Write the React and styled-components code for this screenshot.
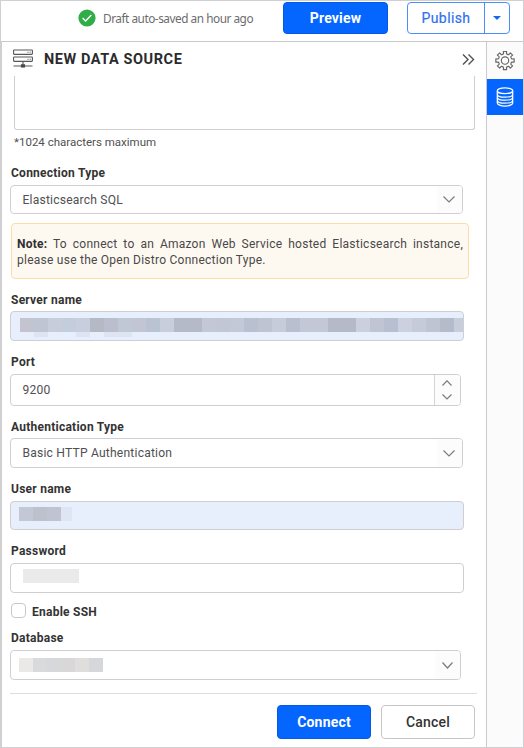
import React from "react";
import styled, { createGlobalStyle, css } from "styled-components";

const GlobalStyle = createGlobalStyle`
  *, *::before, *::after { box-sizing: border-box; }
  body { margin: 0; background: #fff; }
  button { font: inherit; margin: 0; padding: 0; }
`;

const Frame = styled.div`
  width: 524px;
  height: 748px;
  display: flex;
  flex-direction: column;
  border: 1px solid #d0d0d2;
  overflow: hidden;
  background: #fff;
  color: #333;
  font-family: Roboto, sans-serif;
`;

const TopBar = styled.header`
  height: 41px;
  flex: none;
  display: flex;
  align-items: flex-start;
  padding: 1px 12px 0 77px;
  border-bottom: 1px solid #c9c9cb;
`;

const SavedStatus = styled.div`
  display: flex;
  align-items: center;
  gap: 7px;
  width: 205px;
  height: 31px;
  color: #6c6c6e;
  font: 11.8px "Noto Sans", sans-serif;
  letter-spacing: -0.47px;
  white-space: nowrap;
  svg { flex: none; }
`;

const Button = styled.button`
  display: flex;
  align-items: center;
  justify-content: center;
  width: ${(p) => p.$width}px;
  height: ${(p) => p.$height}px;
  border-radius: 4px;
  font-size: 14px;
  font-weight: ${(p) => (p.$primary ? 700 : 500)};
  letter-spacing: 0.2px;
  ${(p) =>
    p.$primary
      ? css`background: #0565ff; color: #fff; border: 1px solid #0458e6;`
      : css`background: #fff; color: #333; border: 1px solid #c6c6c8;`}
`;

const SplitButton = styled.div`
  display: flex;
  width: 103px;
  height: 32px;
  margin-left: 19px;
  border: 1px solid #4a8dfb;
  border-radius: 4px;
  color: #2f70f0;
`;

const SplitMain = styled.button`
  flex: 1;
  border: 0;
  background: none;
  color: inherit;
  font-size: 14px;
  font-weight: 400;
  letter-spacing: 0.4px;
  -webkit-text-stroke: 0.2px;
`;

const SplitToggle = styled.button`
  display: grid;
  place-items: center;
  width: 25px;
  border: 0;
  border-left: 1px solid #4a8dfb;
  background: none;
`;

const Body = styled.div`
  flex: 1;
  display: flex;
  min-height: 0;
`;

const Panel = styled.main`
  width: 485px;
  padding: 0 9px;
  border-left: 1px solid #d0d0d2;
`;

const Rail = styled.nav`
  flex: 1;
  background: #fbfbfb;
  border-left: 1px solid #cbcbcd;
`;

const RailItem = styled.button`
  display: grid;
  place-items: center;
  width: 100%;
  height: ${(p) => (p.$active ? 36 : 37)}px;
  border: 0;
  background: ${(p) => (p.$active ? "#0565ff" : "#fbfbfb")};
`;

const TitleRow = styled.div`
  display: flex;
  align-items: center;
  height: 34px;
  padding: 0 2px;
`;

const Title = styled.h1`
  flex: 1;
  margin: 0 0 0 11px;
  font-size: 14.5px;
  font-weight: 700;
  letter-spacing: 0.57px;
  color: #2b2b2d;
`;

const TextArea = styled.div`
  width: 461px;
  height: 54px;
  margin-left: 3px;
  border: 1px solid #cfcfd1;
  border-top: 0;
  border-radius: 0 0 3px 3px;
`;

const Helper = styled.div`
  margin: 2px 0 0 3px;
  font-size: 11.5px;
  line-height: 20px;
  color: #505052;
`;

const Label = styled.div`
  height: 20px;
  margin-top: ${(p) => p.$top}px;
  font-size: 12px;
  font-weight: 700;
  line-height: ${(p) => (p.$low ? 22 : 20)}px;
  letter-spacing: 0.25px;
`;

const Field = styled.div`
  display: flex;
  width: ${(p) => p.$width}px;
  height: ${(p) => p.$height}px;
  margin: ${(p) => p.$top ?? 2}px 0 0 -1px;
  border: 1px solid #cfcfd1;
  border-radius: 4px;
  overflow: hidden;
  background: ${(p) => (p.$filled ? "#e7eefc" : "#fff")};
`;

const Value = styled.div`
  flex: 1;
  align-self: center;
  padding-left: 11.5px;
  font-size: 12.1px;
  letter-spacing: 0.2px;
  color: #505052;
`;

const FieldEnd = styled.div`
  display: flex;
  flex-direction: column;
  align-items: center;
  justify-content: center;
  gap: 8px;
  width: ${(p) => (p.$divided ? 26 : 25)}px;
  padding-right: ${(p) => p.$inset ?? 2}px;
  background: #fcfcfc;
  border-left: ${(p) => (p.$divided ? "1px solid #d3d3d5" : "0")};
`;

const Note = styled.div`
  width: 458px;
  height: 56px;
  margin: 9px 0 0 0;
  padding: 12px 5px 0;
  border: 1px solid #fbdda9;
  border-radius: 4px;
  background: #fef9f0;
  font-size: 12px;
  line-height: 16px;
  letter-spacing: 0.25px;
  color: #48484a;
  text-align: justify;
`;

const NoteLead = styled.b`
  color: #303032;
`;

const Redacted = styled.div`
  flex: 1;
  padding: ${(p) => p.$pad};
`;

const MosaicRow = styled.div`
  display: flex;
  height: ${(p) => p.$height}px;
`;

const Cell = styled.span`
  flex: none;
  width: ${(p) => p.$width ?? 14}px;
  background: ${(p) => p.$color};
`;

const CheckRow = styled.label`
  display: flex;
  align-items: center;
  gap: 6px;
  height: 16px;
  margin-top: 9px;
  font-size: 12px;
  letter-spacing: 0.25px;
`;

const CheckBox = styled.span`
  width: 15px;
  height: 15px;
  border: 1px solid #c9c9cb;
  border-radius: 4px;
`;

const CheckText = styled.span`
  padding-top: 3px;
  font-weight: 700;
`;

const Footer = styled.footer`
  display: flex;
  justify-content: flex-end;
  gap: 10px;
  width: 467px;
  margin: 13px 0 0 -1px;
  padding: 11px 2px 0 0;
  border-top: 1px solid #dededf;
`;

const SERVER = "#c3c4cf #bfc5d3 #c8cddb #c4cddb #c9cedc #b5b9c5 #bbbfcd #c0c8d5 #c2c6d4 #b9c3d1 #c8cedb #b4bac8 #b4bac8 #c4c8d6 #c1c7d5 #c4c9d7 #b9c0d0 #bfc4d2 #c7ccda #b9bfce #c2c8d5 #c4c8d6 #b6bac7 #b6bac7 #ccd0de #c1c4d1 #b7bfd1 #cdd0de #c5cbd9 #bfc4d3 #b4bbcb #c7cddb".split(" ");
const SERVER_TAIL = [0, 1, 0, 0, 1, 0, 1, 1].map((on) => (on ? "#dee4f4" : "transparent"));

const Mosaic = ({ colors, height = 14, last }) => (
  <MosaicRow $height={height}>
    {colors.map((c, i) => (
      <Cell key={i} $color={c} $width={i === colors.length - 1 ? last : undefined} />
    ))}
  </MosaicRow>
);

const Chevron = ({ w = 12, h = 6, up }) => (
  <svg width={w} height={h + 1} viewBox={`0 0 ${w} ${h + 1}`} fill="none" stroke="#7c7c7e" strokeWidth="1.2">
    <path d={up ? `M.5 ${h + 0.5}L${w / 2} .8l${w / 2 - 0.5} ${h - 0.3}` : `M.5 .5L${w / 2} ${h}L${w - 0.5} .5`} />
  </svg>
);

const CheckIcon = () => (
  <svg width="18" height="18" viewBox="0 0 18 18">
    <circle cx="9" cy="9" r="8.6" fill="#2fad47" />
    <path d="M4.6 9.1l3 3 5.7-6" fill="none" stroke="#fff" strokeWidth="1.4" />
  </svg>
);

const ServerIcon = () => (
  <svg width="20" height="20" viewBox="0 0 20 20" fill="none" stroke="#58585a" strokeWidth="1.1">
    <rect x=".6" y="1" width="18.8" height="4.4" rx=".6" />
    <rect x=".6" y="8" width="18.8" height="4.4" rx=".6" />
    <path d="M14.5 3.2h1M16.7 3.2h1M14.5 10.2h1M16.7 10.2h1M10 12.4v3M.5 17h19" />
    <rect x="8.3" y="15.7" width="3.4" height="2.4" fill="#48484a" stroke="#48484a" strokeWidth=".8" />
  </svg>
);

const gearOutline = () => {
  const at = (r, deg) => {
    const a = (deg * Math.PI) / 180;
    return `${(10 + r * Math.cos(a)).toFixed(2)} ${(10 + r * Math.sin(a)).toFixed(2)}`;
  };
  let d = "";
  for (let i = 0; i < 8; i++) {
    const c = i * 45;
    d += `${i ? "L" : "M"}${at(7, c - 12)}L${at(9.3, c - 10)}L${at(9.3, c + 10)}L${at(7, c + 12)}Q${at(6.2, c + 22.5)} ${at(7, c + 33)}`;
  }
  return `${d}Z`;
};

const GearIcon = () => (
  <svg width="20" height="20" viewBox="0 .5 20 20" fill="none" stroke="#666668" strokeWidth="1.15" strokeLinejoin="round">
    <path d={gearOutline()} />
    <circle cx="10" cy="10" r="3.7" />
  </svg>
);

const DatabaseIcon = () => (
  <svg width="18" height="20" viewBox="0 0 18 20" fill="none" stroke="#fff" strokeWidth="1.25">
    <ellipse cx="9" cy="3.8" rx="7.7" ry="2.9" />
    <path d="M1.3 4v12c0 1.7 3.4 3.1 7.7 3.1s7.7-1.4 7.7-3.1V4M1.3 7.2c0 1.7 3.4 3 7.7 3s7.7-1.3 7.7-3M1.3 10.2c0 1.7 3.4 3 7.7 3s7.7-1.3 7.7-3M1.3 13.2c0 1.7 3.4 3 7.7 3s7.7-1.3 7.7-3" />
  </svg>
);

export default function App() {
  return (
    <>
      <GlobalStyle />
      <Frame>
        <TopBar>
          <SavedStatus><CheckIcon /><span>Draft auto-saved an hour ago</span></SavedStatus>
          <Button $primary $width={105} $height={32}>Preview</Button>
          <SplitButton>
            <SplitMain>Publish</SplitMain>
            <SplitToggle aria-label="Publish options">
              <svg width="8" height="4" viewBox="0 0 8 4"><path d="M0 0h8L4 4z" fill="#1768f5" /></svg>
            </SplitToggle>
          </SplitButton>
        </TopBar>
        <Body>
          <Panel>
            <TitleRow>
              <ServerIcon />
              <Title>NEW DATA SOURCE</Title>
              <svg width="13" height="12" viewBox="0 0 13 12" fill="none" stroke="#505052" strokeWidth="1.4">
                <path d="M1 1.5l5 5-5 5M6.5 1.5l5 5-5 5" />
              </svg>
            </TitleRow>
            <TextArea />
            <Helper>*1024 characters maximum</Helper>

            <Label $top={10} $low>Connection Type</Label>
            <Field $width={453} $height={29} $top={3}>
              <Value>Elasticsearch SQL</Value>
              <FieldEnd><Chevron /></FieldEnd>
            </Field>
            <Note>
              <NoteLead>Note:</NoteLead> To connect to an Amazon Web Service hosted Elasticsearch instance, please use the Open Distro Connection Type.
            </Note>

            <Label $top={10} $low>Server name</Label>
            <Field $width={454} $height={30} $filled>
              <Redacted $pad="6px 0 0 9px">
                <Mosaic colors={SERVER} last={9} />
                <Mosaic colors={SERVER_TAIL} height={5} />
              </Redacted>
            </Field>

            <Label $top={11}>Port</Label>
            <Field $width={451} $height={32}>
              <Value>9200</Value>
              <FieldEnd $divided><Chevron w={10} h={5} up /><Chevron w={10} h={5} /></FieldEnd>
            </Field>

            <Label $top={10} $low>Authentication Type</Label>
            <Field $width={453} $height={30}>
              <Value>Basic HTTP Authentication</Value>
              <FieldEnd><Chevron /></FieldEnd>
            </Field>

            <Label $top={10} $low>User name</Label>
            <Field $width={454} $height={29} $top={3} $filled>
              <Redacted $pad="5px 0 0 8px">
                <Mosaic colors={["#c3c8d6", "#bdc1ce", "#bfc3d2", "#dfe5f5"]} last={11} />
              </Redacted>
            </Field>

            <Label $top={11}>Password</Label>
            <Field $width={454} $height={30}>
              <Redacted $pad="5px 0 0 12px">
                <Mosaic colors={["#eaeaea", "#eaeaea", "#eaeaea", "#eaeaea"]} />
              </Redacted>
            </Field>

            <CheckRow><CheckBox /><CheckText>Enable SSH</CheckText></CheckRow>

            <Label $top={10}>Database</Label>
            <Field $width={451} $height={30}>
              <Redacted $pad="7px 0 0 8px">
                <Mosaic colors={["#eae9e8", "#d9dadd", "#d7d8dc", "#d8d8d8", "#dfdedd", "#d6d7db"]} />
              </Redacted>
              <FieldEnd $inset={0}><Chevron w={11} /></FieldEnd>
            </Field>

            <Footer>
              <Button $primary $width={94} $height={34}>Connect</Button>
              <Button $width={94} $height={34}>Cancel</Button>
            </Footer>
          </Panel>
          <Rail>
            <RailItem aria-label="Settings"><GearIcon /></RailItem>
            <RailItem $active aria-label="Data sources"><DatabaseIcon /></RailItem>
          </Rail>
        </Body>
      </Frame>
    </>
  );
}
